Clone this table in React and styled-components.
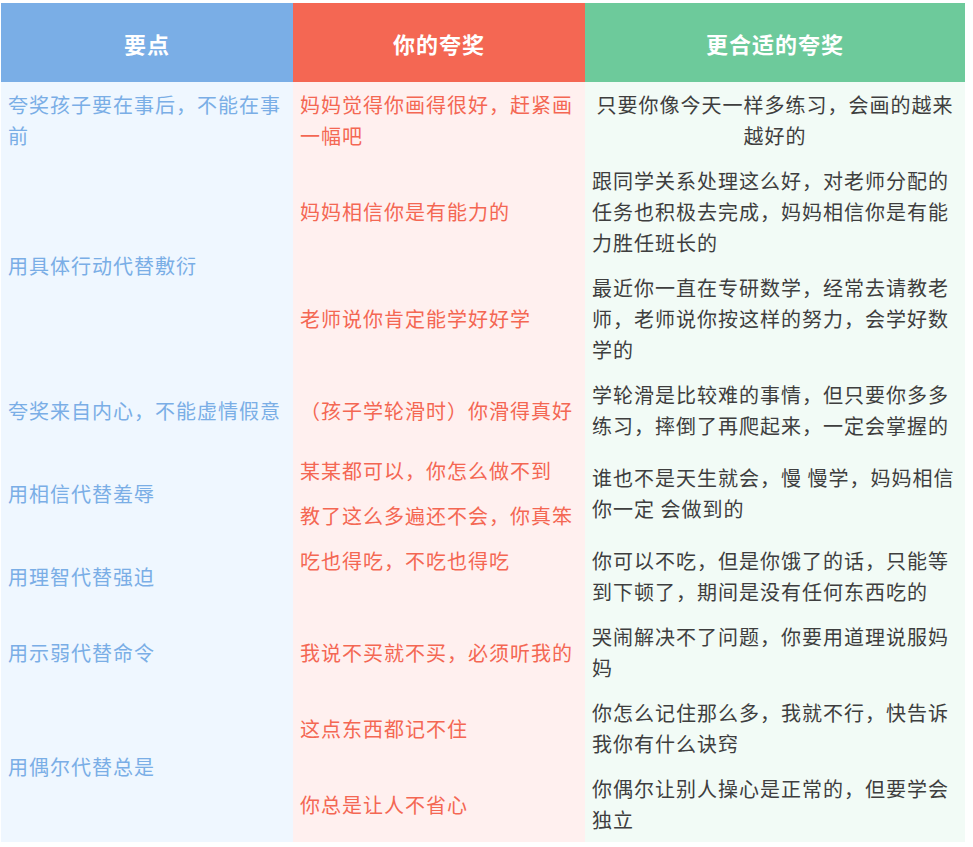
import styled, { createGlobalStyle } from 'styled-components'

const GlobalStyle = createGlobalStyle`
	body {
		margin: 0;
		background: #ffffff;
		font-family: 'Noto Sans CJK SC', 'Noto Sans', sans-serif;
	}
`

const tones = {
	point: { head: '#7aaee6', bg: '#eff7ff', text: '#7aaee6' },
	yours: { head: '#f46753', bg: '#fff0ef', text: '#f46753' },
	better: { head: '#6dca9b', bg: '#f2fbf6', text: '#3e3e3e' },
}

const Wrap = styled.div`
	padding: 3px 0 0 1px;
`

const Table = styled.table`
	width: 964px;
	border-collapse: collapse;
	table-layout: fixed;
	font-family: 'Noto Sans CJK SC', sans-serif;
`

const HeadCell = styled.th`
	height: 79px;
	padding: 0;
	background: ${(p) => tones[p.$tone].head};
	color: #ffffff;
	font-size: 22px;
	font-weight: 700;
	letter-spacing: 1px;
	text-align: center;
	vertical-align: middle;
`

const Cell = styled.td`
	padding: 7px 7px 7px 7px;
	background: ${(p) => tones[p.$tone].bg};
	color: ${(p) => tones[p.$tone].text};
	font-size: 20px;
	line-height: 31px;
	letter-spacing: 1px;
	text-align: ${(p) => (p.$center ? 'center' : 'left')};
	vertical-align: middle;
	word-break: break-all;
`

const rows = [
	[
		{ tone: 'point', text: '夸奖孩子要在事后，不能在事前' },
		{ tone: 'yours', text: '妈妈觉得你画得很好，赶紧画一幅吧' },
		{ tone: 'better', text: '只要你像今天一样多练习，会画的越来越好的', center: true },
	],
	[
		{ tone: 'point', text: '用具体行动代替敷衍', rowSpan: 2 },
		{ tone: 'yours', text: '妈妈相信你是有能力的' },
		{ tone: 'better', text: '跟同学关系处理这么好，对老师分配的任务也积极去完成，妈妈相信你是有能力胜任班长的' },
	],
	[
		{ tone: 'yours', text: '老师说你肯定能学好好学' },
		{ tone: 'better', text: '最近你一直在专研数学，经常去请教老师，老师说你按这样的努力，会学好数学的' },
	],
	[
		{ tone: 'point', text: '夸奖来自内心，不能虚情假意' },
		{ tone: 'yours', text: '（孩子学轮滑时）你滑得真好' },
		{ tone: 'better', text: '学轮滑是比较难的事情，但只要你多多练习，摔倒了再爬起来，一定会掌握的' },
	],
	[
		{ tone: 'point', text: '用相信代替羞辱', rowSpan: 2 },
		{ tone: 'yours', text: '某某都可以，你怎么做不到' },
		{ tone: 'better', text: '谁也不是天生就会，慢 慢学，妈妈相信你一定 会做到的', rowSpan: 2 },
	],
	[{ tone: 'yours', text: '教了这么多遍还不会，你真笨' }],
	[
		{ tone: 'point', text: '用理智代替强迫' },
		{ tone: 'yours', text: '吃也得吃，不吃也得吃', trailing: true },
		{ tone: 'better', text: '你可以不吃，但是你饿了的话，只能等到下顿了，期间是没有任何东西吃的' },
	],
	[
		{ tone: 'point', text: '用示弱代替命令' },
		{ tone: 'yours', text: '我说不买就不买，必须听我的' },
		{ tone: 'better', text: '哭闹解决不了问题，你要用道理说服妈妈' },
	],
	[
		{ tone: 'point', text: '用偶尔代替总是', rowSpan: 2 },
		{ tone: 'yours', text: '这点东西都记不住' },
		{ tone: 'better', text: '你怎么记住那么多，我就不行，快告诉我你有什么诀窍' },
	],
	[
		{ tone: 'yours', text: '你总是让人不省心' },
		{ tone: 'better', text: '你偶尔让别人操心是正常的，但要学会独立' },
	],
]

export default function App() {
	return (
		<>
			<GlobalStyle />
			<Wrap>
				<Table>
					<colgroup>
						<col style={{ width: 292 }} />
						<col style={{ width: 292 }} />
						<col style={{ width: 380 }} />
					</colgroup>
					<thead>
						<tr>
							<HeadCell $tone="point">要点</HeadCell>
							<HeadCell $tone="yours">你的夸奖</HeadCell>
							<HeadCell $tone="better">更合适的夸奖</HeadCell>
						</tr>
					</thead>
					<tbody>
						{rows.map((row, i) => (
							<tr key={i}>
								{row.map((cell, j) => (
									<Cell
										key={j}
										$tone={cell.tone}
										$center={cell.center}
										rowSpan={cell.rowSpan}
									>
										{cell.text}
										{cell.trailing && <br />}
										{cell.trailing && '\u00a0'}
									</Cell>
								))}
							</tr>
						))}
					</tbody>
				</Table>
			</Wrap>
		</>
	)
}
